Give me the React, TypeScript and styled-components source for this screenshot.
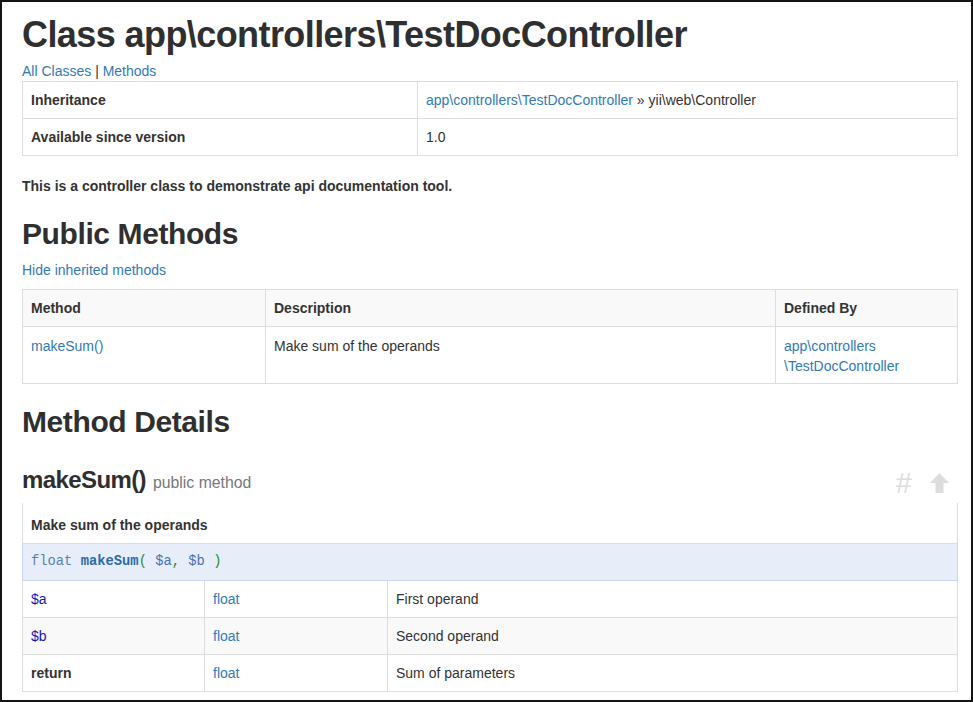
import React from "react";
import styled, { createGlobalStyle } from "styled-components";

const GlobalStyle = createGlobalStyle`
  html, body {
    margin: 0;
    padding: 0;
    background: #ffffff;
  }
  body {
    font-family: "Liberation Sans", Arial, Helvetica, sans-serif;
    font-size: 14px;
    line-height: 20px;
    color: #333333;
  }
  * { box-sizing: border-box; }
`;

const Frame = styled.div`
  width: 973px;
  height: 702px;
  border: 2px solid #141414;
  overflow: hidden;
  background: #fff;
`;

const Content = styled.div`
  display: flex;
  flex-direction: column;
  padding: 0 13px 0 20px;
`;

const Title = styled.h1`
  margin: 13px 0 0;
  font-size: 36px;
  line-height: 40px;
  font-weight: 700;
  letter-spacing: -0.58px;
  color: #2f2f2f;
`;

const NavLinks = styled.div`
  margin-top: 6px;
  line-height: 20px;
  color: #333;
`;

const Link = styled.a`
  color: #337ab7;
  text-decoration: none;
`;

const Table = styled.table<{ $mt?: number; $noTop?: boolean }>`
  width: 100%;
  margin-top: ${(p) => p.$mt ?? 0}px;
  border-collapse: collapse;
  border-spacing: 0;
  table-layout: fixed;
  border: 1px solid #dddddd;
  ${(p) => (p.$noTop ? "border-top: none;" : "")}
`;

const Row = styled.tr<{ $bg?: string }>`
  background: ${(p) => p.$bg ?? "transparent"};
`;

const HeadCell = styled.th`
  padding: 8px;
  border: 1px solid #dddddd;
  text-align: left;
  vertical-align: top;
  font-weight: 700;
  line-height: 20px;
`;

const Cell = styled.td<{ $bold?: boolean; $pt?: number }>`
  padding: ${(p) => p.$pt ?? 8}px 8px ${(p) => 16 - (p.$pt ?? 8)}px;
  border: 1px solid #dddddd;
  text-align: left;
  vertical-align: top;
  line-height: 20px;
  font-weight: ${(p) => (p.$bold ? 700 : 400)};
`;

const ShortDesc = styled.td`
  padding: 12px 8px 8px;
  border: 1px solid #dddddd;
  border-top: none;
  font-weight: 700;
  line-height: 20px;
`;

const SignatureCell = styled.td`
  padding: 8px;
  background: #e7edf9;
  border: 1px solid #c8d6f0;
  font-family: "Liberation Mono", "Courier New", monospace;
  font-size: 13.8px;
  line-height: 20px;
  color: #4a78ad;
`;

const SigType = styled.span`
  color: #5a82b0;
`;

const SigName = styled.span`
  color: #2c6aa6;
  font-weight: 700;
`;

const SigPunct = styled.span`
  color: #2e8b2e;
`;

const SigVar = styled.span`
  color: #4d6fb6;
`;

const ParamName = styled.span`
  color: #1616b4;
`;

const Lead = styled.p`
  margin: 20px 0 0;
  font-weight: 700;
  line-height: 20px;
`;

const SectionTitle = styled.h2<{ $mt: number }>`
  margin: ${(p) => p.$mt}px 0 0;
  font-size: 30px;
  line-height: 33px;
  font-weight: 700;
  letter-spacing: -0.4px;
  color: #2f2f2f;
`;

const ToggleLine = styled.div`
  margin-top: 10px;
  line-height: 20px;
`;

const MethodHeader = styled.div`
  margin-top: 32px;
  display: flex;
  align-items: flex-end;
  justify-content: space-between;
  height: 26px;
`;

const MethodTitle = styled.h3`
  margin: 0;
  font-size: 24px;
  line-height: 26px;
  font-weight: 700;
  letter-spacing: -0.6px;
  color: #2f2f2f;
`;

const MethodKind = styled.small`
  margin-left: 7px;
  font-size: 15.8px;
  font-weight: 400;
  letter-spacing: 0;
  color: #777777;
`;

const Tools = styled.div`
  display: flex;
  align-items: center;
  gap: 18px;
  padding-right: 9px;
  padding-bottom: 1px;
`;

const Anchor = styled.a`
  color: #dddddd;
  font-size: 29px;
  line-height: 24px;
  text-decoration: none;
`;

const UpArrow = () => (
  <svg width="19" height="20" viewBox="0 0 19 20" aria-hidden="true">
    <path d="M9.5 0 L19 10 L13.5 10 L13.5 20 L5.5 20 L5.5 10 L0 10 Z" fill="#dddddd" />
  </svg>
);

export default function App() {
  return (
    <>
      <GlobalStyle />
      <Frame>
        <Content>
          <Title>Class app\controllers\TestDocController</Title>
          <NavLinks>
            <Link href="#">All Classes</Link> | <Link href="#">Methods</Link>
          </NavLinks>

          <Table>
            <colgroup>
              <col style={{ width: 395 }} />
              <col />
            </colgroup>
            <tbody>
              <Row>
                <HeadCell>Inheritance</HeadCell>
                <Cell>
                  <Link href="#">app\controllers\TestDocController</Link> » yii\web\Controller
                </Cell>
              </Row>
              <Row>
                <HeadCell>Available since version</HeadCell>
                <Cell>1.0</Cell>
              </Row>
            </tbody>
          </Table>

          <Lead>This is a controller class to demonstrate api documentation tool.</Lead>

          <SectionTitle $mt={21}>Public Methods</SectionTitle>
          <ToggleLine>
            <Link href="#">Hide inherited methods</Link>
          </ToggleLine>

          <Table $mt={9}>
            <colgroup>
              <col style={{ width: 243 }} />
              <col style={{ width: 510 }} />
              <col />
            </colgroup>
            <thead>
              <Row $bg="#f9f9f9">
                <HeadCell>Method</HeadCell>
                <HeadCell>Description</HeadCell>
                <HeadCell>Defined By</HeadCell>
              </Row>
            </thead>
            <tbody>
              <Row>
                <Cell $pt={9}>
                  <Link href="#">makeSum()</Link>
                </Cell>
                <Cell $pt={9}>Make sum of the operands</Cell>
                <Cell $pt={9}>
                  <Link href="#">
                    app\controllers
                    <wbr />
                    \TestDocController
                  </Link>
                </Cell>
              </Row>
            </tbody>
          </Table>

          <SectionTitle $mt={21}>Method Details</SectionTitle>

          <MethodHeader>
            <MethodTitle>
              makeSum()
              <MethodKind>public method</MethodKind>
            </MethodTitle>
            <Tools>
              <Anchor href="#">#</Anchor>
              <UpArrow />
            </Tools>
          </MethodHeader>

          <Table $mt={7} $noTop>
            <colgroup>
              <col style={{ width: 182 }} />
              <col style={{ width: 183 }} />
              <col />
            </colgroup>
            <tbody>
              <Row>
                <ShortDesc colSpan={3}>Make sum of the operands</ShortDesc>
              </Row>
              <Row>
                <SignatureCell colSpan={3}>
                  <SigType>float</SigType> <SigName>makeSum</SigName>
                  <SigPunct>(</SigPunct> <SigVar>$a</SigVar>
                  <SigPunct>,</SigPunct> <SigVar>$b</SigVar> <SigPunct>)</SigPunct>
                </SignatureCell>
              </Row>
              <Row>
                <Cell>
                  <ParamName>$a</ParamName>
                </Cell>
                <Cell>
                  <Link href="#">float</Link>
                </Cell>
                <Cell>First operand</Cell>
              </Row>
              <Row $bg="#f9f9f9">
                <Cell>
                  <ParamName>$b</ParamName>
                </Cell>
                <Cell>
                  <Link href="#">float</Link>
                </Cell>
                <Cell>Second operand</Cell>
              </Row>
              <Row>
                <Cell $bold>return</Cell>
                <Cell>
                  <Link href="#">float</Link>
                </Cell>
                <Cell>Sum of parameters</Cell>
              </Row>
            </tbody>
          </Table>
        </Content>
      </Frame>
    </>
  );
}
